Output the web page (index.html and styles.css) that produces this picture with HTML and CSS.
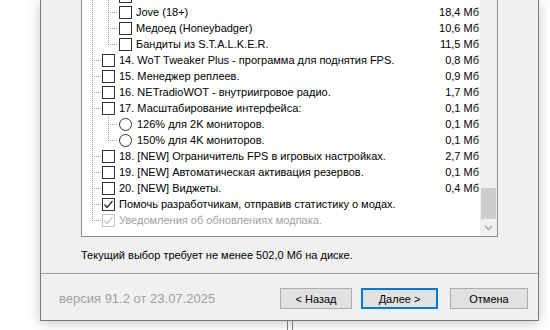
FILE: index.html
```html
<!DOCTYPE html>
<html lang="ru">
<head>
  <meta charset="UTF-8">
  <title>Установка модпака</title>
  <link rel="stylesheet" href="styles.css">
</head>
<body>
  <div class="wizard">
    <div class="page">
      <div class="list">
        <ul class="tree">
          <li class="item">
            <ul class="sub">
              <li class="child"><div class="row"><span class="box"></span></div></li>
              <li class="child"><div class="row"><span class="box"></span><span class="name">Jove (18+)</span><span class="size">18,4 Мб</span></div></li>
              <li class="child"><div class="row"><span class="box"></span><span class="name">Медоед (Honeybadger)</span><span class="size">10,6 Мб</span></div></li>
              <li class="child last"><div class="row"><span class="box"></span><span class="name">Бандиты из S.T.A.L.K.E.R.</span><span class="size">11,5 Мб</span></div></li>
            </ul>
          </li>
          <li class="item"><div class="row"><span class="box"></span><span class="name">14. WoT Tweaker Plus - программа для поднятия FPS.</span><span class="size">0,8 Мб</span></div></li>
          <li class="item"><div class="row"><span class="box"></span><span class="name">15. Менеджер реплеев.</span><span class="size">0,9 Мб</span></div></li>
          <li class="item"><div class="row"><span class="box"></span><span class="name">16. NETradioWOT - внутриигровое радио.</span><span class="size">1,7 Мб</span></div></li>
          <li class="item">
            <div class="row"><span class="box"></span><span class="name">17. Масштабирование интерфейса:</span><span class="size">0,1 Мб</span></div>
            <ul class="sub">
              <li class="child"><div class="row"><span class="box radio"></span><span class="name">126% для 2K мониторов.</span><span class="size">0,1 Мб</span></div></li>
              <li class="child last"><div class="row"><span class="box radio"></span><span class="name">150% для 4K мониторов.</span><span class="size">0,1 Мб</span></div></li>
            </ul>
          </li>
          <li class="item"><div class="row"><span class="box"></span><span class="name">18. [NEW] Ограничитель FPS в игровых настройках.</span><span class="size">2,7 Мб</span></div></li>
          <li class="item"><div class="row"><span class="box"></span><span class="name">19. [NEW] Автоматическая активация резервов.</span><span class="size">0,1 Мб</span></div></li>
          <li class="item"><div class="row"><span class="box"></span><span class="name">20. [NEW] Виджеты.</span><span class="size">0,4 Мб</span></div></li>
          <li class="item">
            <div class="row">
              <span class="box"><svg width="11" height="11" viewBox="0 0 11 11"><polyline points="1.5,5.5 4,8.5 9.5,2" fill="none" stroke="#222" stroke-width="1.2"/></svg></span>
              <span class="name">Помочь разработчикам, отправив статистику о модах.</span>
            </div>
          </li>
          <li class="item last">
            <div class="row disabled">
              <span class="box"><svg width="11" height="11" viewBox="0 0 11 11"><polyline points="1.5,5.5 4,8.5 9.5,2" fill="none" stroke="#c4c4c4" stroke-width="1.2"/></svg></span>
              <span class="name">Уведомления об обновлениях модпака.</span>
            </div>
          </li>
        </ul>
        <div class="scrollbar">
          <div class="track"></div>
          <div class="thumb"></div>
          <div class="arrow"><svg width="9" height="6" viewBox="0 0 9 6"><polyline points="1,1 4.5,4.5 8,1" fill="none" stroke="#a6a6a6" stroke-width="1.3"/></svg></div>
        </div>
      </div>
      <p class="status">Текущий выбор требует не менее 502,0 Мб на диске.</p>
    </div>
    <div class="footer">
      <span class="version">версия 91.2 от 23.07.2025</span>
      <button class="btn back">&lt; Назад</button>
      <button class="btn next">Далее &gt;</button>
      <button class="btn cancel">Отмена</button>
    </div>
  </div>
  <div class="behind"></div>
</body>
</html>
```

FILE: styles.css
```css
body {
  margin: 0;
  height: 330px;
  overflow: hidden;
  background-color: #fff;
  font-family: "Liberation Sans", Arial, sans-serif;
  font-size: 11px;
  color: #000;
}
.wizard {
  box-sizing: border-box;
  width: 499px;
  height: 321px;
  margin-left: 40px;
  background-color: #f0f0f0;
  border: 1px solid #7a7a7a;
  border-top: none;
  box-shadow: 0 2px 12px rgba(0, 0, 0, 0.22);
}
.page {
  box-sizing: border-box;
  height: 273px;
  padding: 0 40px;
}
.list {
  box-sizing: border-box;
  height: 237px;
  display: flex;
  background-color: #fff;
  border: 1px solid #8c8c8c;
  border-top: none;
  overflow: hidden;
}
.tree {
  flex: 1;
  list-style: none;
  margin: -12px 0 0;
  padding: 0 1px 0 0;
}
.sub {
  list-style: none;
  margin: 0;
  padding: 0;
}
.item,
.child {
  position: relative;
}
.item::before,
.child::before {
  content: "";
  position: absolute;
  left: 10px;
  top: 0;
  bottom: 0;
  width: 1px;
  background: repeating-linear-gradient(to bottom, #a0a0a0 0 1px, transparent 1px 2px);
}
.child::before {
  left: 26px;
}
.item.last::before,
.child.last::before {
  bottom: auto;
  height: 9px;
}
.row {
  position: relative;
  display: flex;
  align-items: center;
  height: 16px;
  padding-left: 20px;
  white-space: nowrap;
}
.row::before {
  content: "";
  position: absolute;
  left: 12px;
  top: 8px;
  width: 8px;
  height: 1px;
  background: repeating-linear-gradient(to right, #a0a0a0 0 1px, transparent 1px 2px);
}
.child .row {
  padding-left: 37px;
}
.child .row::before {
  left: 28px;
}
.box {
  box-sizing: border-box;
  width: 13px;
  height: 13px;
  flex: none;
  margin-right: 4px;
  display: flex;
  align-items: center;
  justify-content: center;
  background-color: #fff;
  border: 1px solid #333;
}
.box.radio {
  border-radius: 50%;
  margin-right: 5px;
}
.disabled {
  color: #a0a0a0;
}
.disabled .box {
  border-color: #c4c4c4;
}
.name {
  flex: 1;
}
.size {
  margin-left: auto;
}
.scrollbar {
  width: 17px;
  flex: none;
  display: flex;
  flex-direction: column;
  background-color: #f0f0f0;
}
.track {
  flex: 1;
}
.thumb {
  height: 31px;
  margin: 0 1px;
  background-color: #cdcdcd;
}
.arrow {
  height: 17px;
  display: flex;
  align-items: center;
  justify-content: center;
}
.status {
  margin: 12px 0 0;
  line-height: 13px;
}
.footer {
  box-sizing: border-box;
  height: 47px;
  display: flex;
  align-items: flex-start;
  padding: 14px 10px 0 18px;
  border-top: 1px solid #a0a0a0;
}
.version {
  margin-top: 3px;
  margin-right: auto;
  font-size: 13px;
  line-height: 15px;
  color: #a0a0a0;
}
.btn {
  box-sizing: border-box;
  height: 21px;
  padding: 0;
  font-family: "Liberation Sans", Arial, sans-serif;
  font-size: 11px;
  color: #000;
  background-color: #e1e1e1;
  border: 1px solid #adadad;
}
.back {
  width: 72px;
}
.next {
  width: 77px;
  margin-left: 9px;
  border: 2px solid #0078d7;
}
.cancel {
  width: 78px;
  margin-left: 12px;
}
.behind {
  box-sizing: border-box;
  width: 6px;
  height: 10px;
  margin-left: 287px;
  border-left: 1px solid #7a7a7a;
  border-right: 1px solid #7a7a7a;
}
```
